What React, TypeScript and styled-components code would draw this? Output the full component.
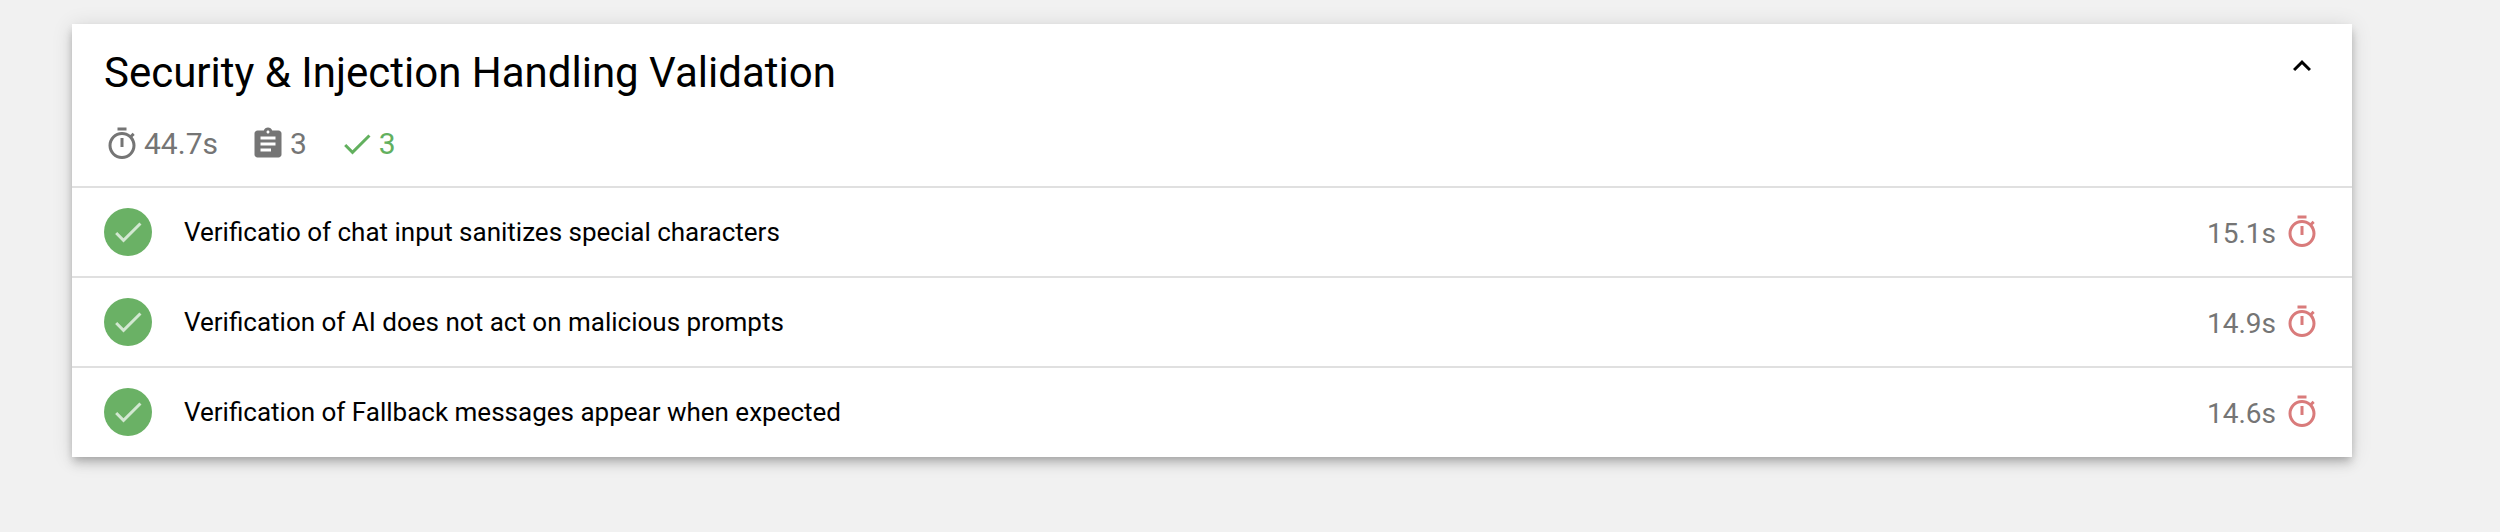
import React from "react";
import styled, { createGlobalStyle } from "styled-components";

const GlobalStyle = createGlobalStyle`
  html, body {
    margin: 0;
    height: 100%;
    background: #f1f1f1;
    font-family: Roboto, "Liberation Sans", sans-serif;
  }
`;

const Page = styled.div`
  padding: 24px 148px 0 72px;
  height: 532px;
  box-sizing: border-box;
  overflow: hidden;
`;

const Card = styled.section`
  background: #fff;
  padding-bottom: 1px;
  box-shadow: 0 4px 8px -2px rgba(0, 0, 0, 0.2), 0 8px 10px 0 rgba(0, 0, 0, 0.1), 0 2px 20px 0 rgba(0, 0, 0, 0.12);
`;

const Header = styled.header`
  height: 162px;
  padding: 24px 32px 0;
  box-sizing: border-box;
  display: flex;
  justify-content: space-between;
  align-items: flex-start;
`;

const HeaderText = styled.div`
  display: flex;
  flex-direction: column;
  gap: 28px;
`;

const Title = styled.h2`
  margin: 0;
  font-size: 42px;
  line-height: 50px;
  font-weight: 400;
  color: #000;
`;

const Stats = styled.div`
  display: flex;
  align-items: center;
  gap: 32px;
`;

const Stat = styled.div<{ $color?: string }>`
  display: flex;
  align-items: center;
  gap: 4px;
  font-size: 30px;
  line-height: 36px;
  color: ${(p) => p.$color || "#757575"};
`;

const Collapse = styled.button`
  border: 0;
  background: none;
  padding: 0;
  display: flex;
  color: #000;
`;

const Row = styled.div`
  height: 90px;
  padding: 0 32px;
  box-sizing: border-box;
  border-top: 2px solid #e0e0e0;
  display: flex;
  align-items: center;
`;

const StatusDot = styled.span`
  width: 48px;
  height: 48px;
  border-radius: 50%;
  background: #6ab165;
  color: rgba(255, 255, 255, 0.7);
  display: flex;
  align-items: center;
  justify-content: center;
  flex-shrink: 0;
`;

const RowLabel = styled.span`
  flex: 1;
  margin-left: 32px;
  font-size: 26px;
  line-height: 36px;
  color: #000;
`;

const Duration = styled.span`
  font-size: 28px;
  line-height: 36px;
  color: #757575;
  margin: 3px 8px 0 0;
`;

const IconSvg = styled.svg<{ $size?: number; $color?: string }>`
  width: ${(p) => p.$size || 36}px;
  height: ${(p) => p.$size || 36}px;
  fill: ${(p) => p.$color || "currentColor"};
  flex-shrink: 0;
  display: block;
`;

const TIMER =
  "M15 1H9v2h6V1zm-4 13h2V8h-2v6zm8.03-6.61l1.42-1.42c-.43-.51-.9-.99-1.41-1.41l-1.42 1.42C16.07 4.74 14.12 4 12 4c-4.97 0-9 4.03-9 9s4.02 9 9 9 9-4.03 9-9c0-2.12-.74-4.07-1.97-5.61zM12 20c-3.87 0-7-3.13-7-7s3.13-7 7-7 7 3.13 7 7-3.13 7-7 7z";
const ASSIGNMENT =
  "M19 3h-4.18C14.4 1.84 13.3 1 12 1c-1.3 0-2.4.84-2.82 2H5c-1.1 0-2 .9-2 2v14c0 1.1.9 2 2 2h14c1.1 0 2-.9 2-2V5c0-1.1-.9-2-2-2zm-7 0c.55 0 1 .45 1 1s-.45 1-1 1-1-.45-1-1 .45-1 1-1zm2 14H7v-2h7v2zm3-4H7v-2h10v2zm0-4H7V7h10v2z";
const CHECK = "M9 16.17L4.83 12l-1.42 1.41L9 19 21 7l-1.41-1.41z";
const EXPAND_LESS = "M12 8l-6 6 1.41 1.41L12 10.83l4.59 4.58L18 14z";

const Icon = ({ d, color }: { d: string; color?: string }) => (
  <IconSvg viewBox="0 0 24 24" $color={color}>
    <path d={d} />
  </IconSvg>
);

const tests = [
  { name: "Verificatio of chat input sanitizes special characters", time: "15.1s" },
  { name: "Verification of AI does not act on malicious prompts", time: "14.9s" },
  { name: "Verification of Fallback messages appear when expected", time: "14.6s" },
];

export default function App() {
  return (
    <Page>
      <GlobalStyle />
      <Card>
        <Header>
          <HeaderText>
            <Title>Security &amp; Injection Handling Validation</Title>
            <Stats>
              <Stat>
                <Icon d={TIMER} />
                44.7s
              </Stat>
              <Stat>
                <Icon d={ASSIGNMENT} />
                3
              </Stat>
              <Stat $color="#62b05e">
                <Icon d={CHECK} />
                3
              </Stat>
            </Stats>
          </HeaderText>
          <Collapse>
            <Icon d={EXPAND_LESS} />
          </Collapse>
        </Header>
        {tests.map((t) => (
          <Row key={t.name}>
            <StatusDot>
              <Icon d={CHECK} />
            </StatusDot>
            <RowLabel>{t.name}</RowLabel>
            <Duration>{t.time}</Duration>
            <Icon d={TIMER} color="#d97b7b" />
          </Row>
        ))}
      </Card>
    </Page>
  );
}
